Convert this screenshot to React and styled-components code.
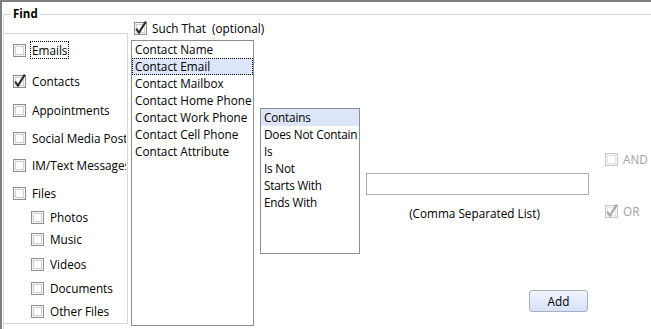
import React from "react";
import styled, { createGlobalStyle } from "styled-components";

const GlobalStyle = createGlobalStyle`
  html, body {
    margin: 0;
    padding: 0;
    background: #ffffff;
    overflow: hidden;
  }
  body {
    font-family: "Open Sans", "Noto Sans", "DejaVu Sans", sans-serif;
    font-size: 11.75px;
    color: #000;
  }
`;

const Frame = styled.div`
  width: 649px;
  height: 327px;
  border-top: 2px solid #7f7f7f;
  border-left: 2px solid #7f7f7f;
  overflow: hidden;
  background: #fff;
`;

const Group = styled.div`
  position: relative;
  margin: 12px 0 0 1px;
  width: 700px;
  height: 400px;
  border-top: 1px solid #d5d9dd;
  border-left: 1px solid #d5d9dd;
  display: flex;
  align-items: flex-start;
`;

const Legend = styled.div`
  position: absolute;
  top: -9px;
  left: 7px;
  padding: 0 2px;
  background: #fff;
  font-weight: 700;
  font-size: 11.5px;
  line-height: 16px;
`;

const SourcePanel = styled.div`
  margin-top: 18px;
  width: 124px;
  min-width: 124px;
  height: 291px;
  border-top: 1px solid #d5d9dd;
  border-right: 1px solid #d5d9dd;
  border-bottom: 1px solid #d5d9dd;
  padding-left: 9px;
  box-sizing: border-box;
  display: flex;
  flex-direction: column;
  overflow: hidden;
`;

const Row = styled.div`
  display: flex;
  align-items: center;
  height: 16px;
  margin-top: ${(p) => p.$gap || 0}px;
  margin-left: ${(p) => (p.$indent ? 18 : 0)}px;
  padding-left: ${(p) => p.$pad || 0}px;
  gap: ${(p) => (p.$tight ? 4 : 5)}px;
  white-space: nowrap;
  color: ${(p) => (p.$disabled ? "#a3a3a3" : "#000")};
`;

const Label = styled.span`
  flex: none;
  line-height: 16px;
  padding: 0 1px;
  margin-left: -1px;
  border: 1px dotted ${(p) => (p.$focus ? "#000" : "transparent")};
  overflow: hidden;
  max-width: ${(p) => p.$max || 200}px;
`;

const Column = styled.div`
  display: flex;
  flex-direction: column;
  flex: none;
  margin-left: ${(p) => p.$left || 0}px;
  margin-top: ${(p) => p.$top || 0}px;
  width: ${(p) => (p.$width ? p.$width + "px" : "auto")};
`;

const ListBox = styled.div`
  width: ${(p) => p.$width}px;
  height: ${(p) => p.$height}px;
  margin-top: ${(p) => p.$top || 0}px;
  border: 1px solid #8a8e96;
  box-sizing: border-box;
  display: flex;
  flex-direction: column;
  letter-spacing: ${(p) => (p.$compact ? "-0.2px" : "0")};
`;

const ListItem = styled.div`
  height: 17px;
  line-height: 15px;
  padding: 0 0 0 2px;
  box-sizing: border-box;
  border: 1px ${(p) => (p.$focus ? "dotted #000" : "solid transparent")};
  background: ${(p) => (p.$selected ? "#dde6f8" : "transparent")};
  white-space: nowrap;
  overflow: hidden;
`;

const TextInput = styled.div`
  width: 223px;
  height: 22px;
  border: 1px solid #abadb3;
  box-sizing: border-box;
  background: #fff;
`;

const Hint = styled.div`
  margin-top: 10px;
  line-height: 16px;
  text-align: center;
  padding-right: 6px;
`;

const Button = styled.button`
  align-self: flex-end;
  margin-top: 69px;
  margin-right: 1px;
  width: 59px;
  height: 22px;
  border: 1px solid #a9b0c0;
  border-radius: 3px;
  background: linear-gradient(#f2f5fd, #e3eafb 50%, #d8e2fa);
  font-family: inherit;
  font-size: 11.75px;
  color: #000;
  padding: 0;
`;

const Check = ({ checked, disabled }) => {
  const edge = disabled ? "#c6c6c6" : "#8e8f8f";
  const inner = disabled ? "#e4e4e4" : "#cfd1d4";
  const tick = disabled ? "#a8a8a8" : "#2a2a2a";
  return (
    <svg width="13" height="13" viewBox="0 0 13 13" style={{ overflow: "visible", flex: "none" }}>
      <rect x="0.5" y="0.5" width="12" height="12" fill="#f5f5f5" stroke={edge} />
      <rect x="2.5" y="2.5" width="8" height="8" fill="#fff" stroke={inner} />
      {checked && (
        <path d="M2.2 6.6 L5 10.6 L11.8 -0.4" fill="none" stroke={tick} strokeWidth="2" strokeLinejoin="miter" />
      )}
    </svg>
  );
};

const sources = [
  { label: "Emails", gap: 8, focus: true },
  { label: "Contacts", gap: 15, checked: true },
  { label: "Appointments", gap: 13 },
  { label: "Social Media Posts", gap: 12 },
  { label: "IM/Text Messages", gap: 11 },
  { label: "Files", gap: 12 },
  { label: "Photos", gap: 8, indent: true },
  { label: "Music", gap: 6, indent: true },
  { label: "Videos", gap: 9, indent: true },
  { label: "Documents", gap: 8, indent: true },
  { label: "Other Files", gap: 7, indent: true },
];

const fields = [
  "Contact Name",
  "Contact Email",
  "Contact Mailbox",
  "Contact Home Phone",
  "Contact Work Phone",
  "Contact Cell Phone",
  "Contact Attribute",
];

const operators = ["Contains", "Does Not Contain", "Is", "Is Not", "Starts With", "Ends With"];

export default function App() {
  return (
    <>
      <GlobalStyle />
      <Frame>
        <Group>
          <Legend>Find</Legend>

          <SourcePanel>
            {sources.map((s) => (
              <Row key={s.label} $gap={s.gap} $indent={s.indent}>
                <Check checked={s.checked} />
                <Label $focus={s.focus} $max={s.indent ? 74 : 93}>
                  {s.label}
                </Label>
              </Row>
            ))}
          </SourcePanel>

          <Column $left={3} $top={5} $width={123}>
            <Row $tight $pad={3}>
              <Check checked />
              <Label>Such That&nbsp; (optional)</Label>
            </Row>
            <ListBox $width={123} $height={286} $top={4}>
              {fields.map((f, i) => (
                <ListItem key={f} $selected={i === 1} $focus={i === 1}>
                  {f}
                </ListItem>
              ))}
            </ListBox>
          </Column>

          <Column $left={6} $top={93} $width={100}>
            <ListBox $width={100} $height={146} $compact>
              {operators.map((o, i) => (
                <ListItem key={o} $selected={i === 0}>
                  {o}
                </ListItem>
              ))}
            </ListBox>
          </Column>

          <Column $left={6} $top={158} $width={223}>
            <TextInput />
            <Hint>(Comma Separated List)</Hint>
            <Button>Add</Button>
          </Column>

          <Column $left={16} $top={136}>
            <Row $disabled>
              <Check disabled />
              <span>AND</span>
            </Row>
            <Row $disabled $gap={36}>
              <Check disabled checked />
              <span>OR</span>
            </Row>
          </Column>
        </Group>
      </Frame>
    </>
  );
}
